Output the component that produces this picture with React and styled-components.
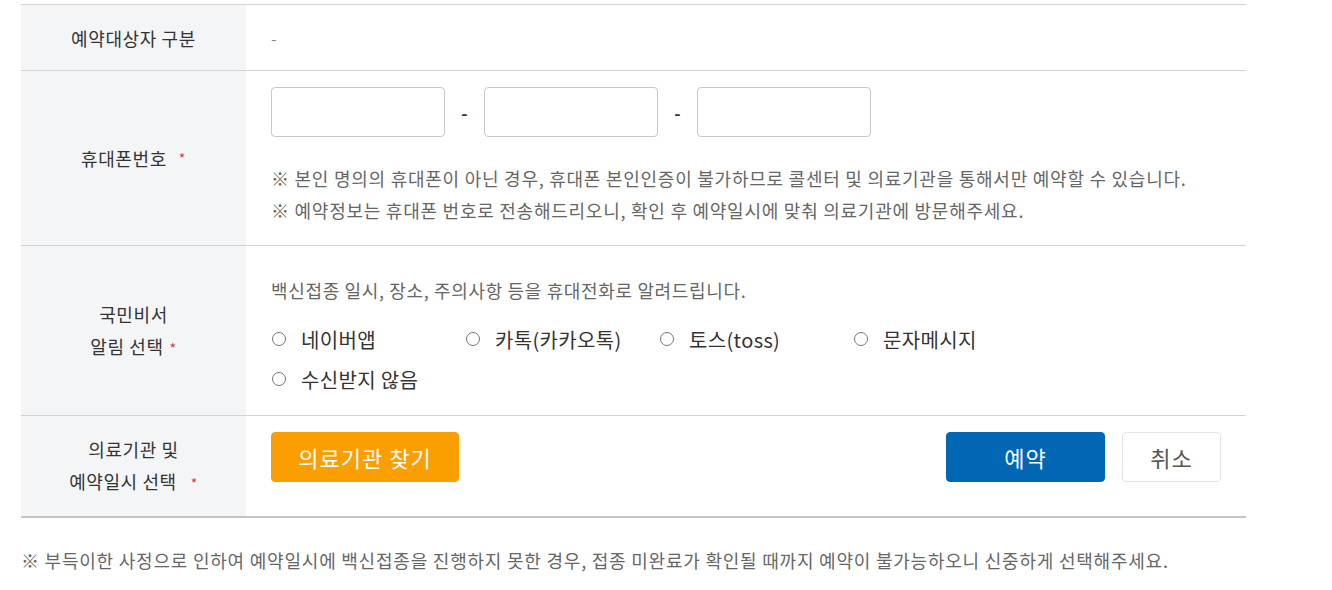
import React from "react";
import styled, { createGlobalStyle } from "styled-components";

const Global = createGlobalStyle`
  html, body { margin: 0; padding: 0; background: #fff; }
  body { font-family: "Noto Sans CJK KR", "Noto Sans", sans-serif; color: #333; }
  * { box-sizing: border-box; }
`;

const Page = styled.div`
  padding: 4px 0 0 21px;
  width: 1246px;
`;

const Table = styled.div`
  border-top: 1px solid #d3d3d3;
  border-bottom: 2px solid #c4c5c8;
`;

const Row = styled.div`
  display: grid;
  grid-template-columns: 225px 1fr;
  min-height: ${(p) => p.$h}px;
  & + & { border-top: 1px solid #d3d3d3; }
`;

const Label = styled.div`
  background: #f4f5f7;
  display: flex;
  align-items: center;
  justify-content: center;
  text-align: center;
  font-size: 18px;
  line-height: 32px;
  color: #333;
  letter-spacing: 0.6px;
`;

const Req = styled.span`
  color: #d6394f;
  font-size: 14px;
  margin-left: ${(p) => p.$gap ?? 12}px;
`;

const Cell = styled.div`
  padding: ${(p) => p.$pad || "0 25px"};
  display: flex;
  flex-direction: column;
  justify-content: ${(p) => p.$justify || "flex-start"};
  font-size: 16px;
  color: #666;
`;

const Dash = styled.span`
  color: #888;
  font-size: 16px;
`;

const PhoneRow = styled.div`
  display: flex;
  align-items: center;
`;

const PhoneInput = styled.input`
  width: 174px;
  height: 50px;
  border: 1px solid #c9c9c9;
  border-radius: 4px;
  background: #fff;
  outline: none;
`;

const Hyphen = styled.span`
  width: 39px;
  text-align: center;
  font-size: 17px;
  color: #333;
  font-weight: 700;
`;

const Notes = styled.div`
  margin-top: 25px;
  font-size: 18px;
  line-height: 32px;
  color: #666;
  letter-spacing: 0.75px;
`;

const Intro = styled.div`
  font-size: 18px;
  line-height: 32px;
  color: #666;
  letter-spacing: 0.65px;
`;

const Radios = styled.div`
  margin-top: 17px;
  display: grid;
  grid-template-columns: repeat(4, 194px);
  row-gap: 8px;
`;

const RadioItem = styled.label`
  display: flex;
  align-items: center;
  height: 32px;
  font-size: 20px;
  color: #333;
  letter-spacing: 0.35px;
`;

const Circle = styled.span`
  width: 14px;
  height: 14px;
  border: 1.5px solid #777;
  border-radius: 50%;
  margin: 0 15px 0 1px;
  flex: none;
`;

const ButtonRow = styled.div`
  display: flex;
  align-items: center;
  justify-content: space-between;
  padding-right: 25px;
`;

const Right = styled.div`
  display: flex;
  gap: 17px;
`;

const Btn = styled.button`
  height: 50px;
  width: ${(p) => p.$w}px;
  border-radius: 4px;
  border: 1px solid ${(p) => p.$border || p.$bg};
  background: ${(p) => p.$bg};
  color: ${(p) => p.$color || "#fff"};
  font-family: "Noto Sans CJK KR", sans-serif;
  font-size: 22px;
  letter-spacing: 1px;
  padding: 0;
  cursor: pointer;
`;

const Footer = styled.p`
  margin: 26px 0 0;
  font-size: 18px;
  line-height: 32px;
  color: #666;
  letter-spacing: 0.78px;
`;

const options = ["네이버앱", "카톡(카카오톡)", "토스(toss)", "문자메시지", "수신받지 않음"];

export default function App() {
  return (
    <>
      <Global />
      <Page>
        <Table>
          <Row $h={65}>
            <Label>예약대상자 구분</Label>
            <Cell $justify="center">
              <Dash>-</Dash>
            </Cell>
          </Row>
          <Row $h={175}>
            <Label>
              휴대폰번호<Req>*</Req>
            </Label>
            <Cell $pad="16px 25px 17px">
              <PhoneRow>
                <PhoneInput />
                <Hyphen>-</Hyphen>
                <PhoneInput />
                <Hyphen>-</Hyphen>
                <PhoneInput />
              </PhoneRow>
              <Notes>
                ※ 본인 명의의 휴대폰이 아닌 경우, 휴대폰 본인인증이 불가하므로 콜센터 및 의료기관을 통해서만 예약할 수 있습니다.
                <br />
                ※ 예약정보는 휴대폰 번호로 전송해드리오니, 확인 후 예약일시에 맞춰 의료기관에 방문해주세요.
              </Notes>
            </Cell>
          </Row>
          <Row $h={169}>
            <Label>
              <div>
                국민비서
                <br />
                알림 선택<Req $gap={6}>*</Req>
              </div>
            </Label>
            <Cell $pad="28px 25px 20px">
              <Intro>백신접종 일시, 장소, 주의사항 등을 휴대전화로 알려드립니다.</Intro>
              <Radios>
                {options.map((o) => (
                  <RadioItem key={o}>
                    <Circle />
                    {o}
                  </RadioItem>
                ))}
              </Radios>
            </Cell>
          </Row>
          <Row $h={101}>
            <Label>
              <div>
                의료기관 및
                <br />
                예약일시 선택<Req $gap={14}>*</Req>
              </div>
            </Label>
            <Cell $pad="16px 0 0 25px">
              <ButtonRow>
                <Btn $w={188} $bg="#fb9e00">의료기관 찾기</Btn>
                <Right>
                  <Btn $w={159} $bg="#0167b5">예약</Btn>
                  <Btn $w={99} $bg="#fff" $border="#e3e3e3" $color="#555">취소</Btn>
                </Right>
              </ButtonRow>
            </Cell>
          </Row>
        </Table>
        <Footer>
          ※ 부득이한 사정으로 인하여 예약일시에 백신접종을 진행하지 못한 경우, 접종 미완료가 확인될 때까지 예약이 불가능하오니 신중하게 선택해주세요.
        </Footer>
      </Page>
    </>
  );
}
